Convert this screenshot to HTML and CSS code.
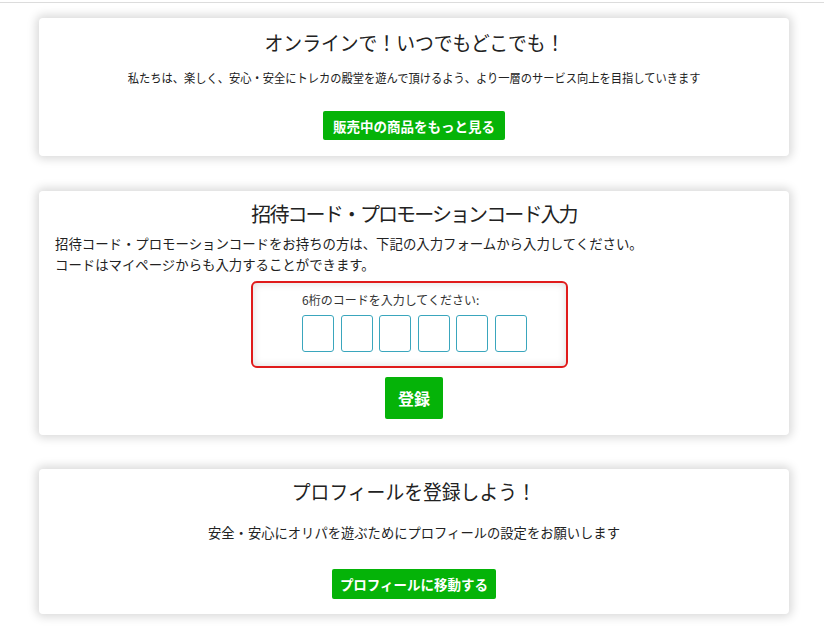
FILE: index.html
```html
<!DOCTYPE html>
<html lang="ja">
<head>
<meta charset="utf-8">
<link rel="stylesheet" href="styles.css">
</head>
<body>
<div class="topbar"></div>
<main class="main">
  <section class="card card-1">
    <h2 class="title"><span class="squeeze sq-title">オンラインで！いつでもどこでも！</span></h2>
    <p class="lead small"><span class="squeeze sq-lead">私たちは、楽しく、安心・安全にトレカの殿堂を遊んで頂けるよう、より一層のサービス向上を目指していきます</span></p>
    <div class="btn-row"><a class="btn btn-1">販売中の商品をもっと見る</a></div>
  </section>

  <section class="card card-2">
    <h2 class="title title-2">招待コード・プロモーションコード入力</h2>
    <p class="desc">招待コード・プロモーションコードをお持ちの方は、下記の入力フォームから入力してください。<br>コードはマイページからも入力することができます。</p>
    <div class="code-wrap">
      <div class="code-box">
        <div class="code-label">6桁のコードを入力してください:</div>
        <div class="code-inputs">
          <input class="code-input" maxlength="1">
          <input class="code-input" maxlength="1">
          <input class="code-input" maxlength="1">
          <input class="code-input" maxlength="1">
          <input class="code-input" maxlength="1">
          <input class="code-input" maxlength="1">
        </div>
      </div>
    </div>
    <div class="btn-row"><a class="btn btn-reg">登録</a></div>
  </section>

  <section class="card card-3">
    <h2 class="title"><span class="squeeze sq-title">プロフィールを登録しよう！</span></h2>
    <p class="lead mid">安全・安心にオリパを遊ぶためにプロフィールの設定をお願いします</p>
    <div class="btn-row"><a class="btn btn-3">プロフィールに移動する</a></div>
  </section>
</main>
</body>
</html>
```

FILE: styles.css
```css
* { box-sizing: border-box; }
html, body { margin: 0; padding: 0; background: #fff; }
body {
  font-family: "Noto Sans CJK JP", "Noto Sans", sans-serif;
  color: #222;
  width: 824px;
  height: 641px;
  overflow: hidden;
}
.topbar {
  height: 3px;
  border-bottom: 1px solid #dcdcdc;
}
.main {
  padding: 15px 35px 0 39px;
  display: flex;
  flex-direction: column;
}
.card {
  width: 750px;
  background: #fff;
  border-radius: 4px;
  box-shadow: 0 0 10px 3px rgba(0, 0, 0, 0.15);
  padding: 12px 16px 16px;
}
.card-2 { margin-top: 35px; padding-top: 10px; }
.card-3 { margin-top: 34px; padding-top: 10px; padding-bottom: 15px; }
.title {
  margin: 0;
  font-size: 20px;
  font-weight: 400;
  line-height: 26px;
  text-align: center;
  color: #222;
}
.title-2 { letter-spacing: -1.9px; }
.squeeze {
  display: inline-block;
  transform-origin: center;
  white-space: nowrap;
}
.sq-title { transform: scaleX(0.94); }
.sq-lead { transform: scaleX(0.9); }
.lead {
  margin: 0;
  text-align: center;
  color: #222;
}
.lead.small { font-size: 12.5px; line-height: 18px; margin-top: 13px; }
.lead.mid { font-size: 13.3px; line-height: 20px; margin-top: 18px; }
.btn-row { display: flex; justify-content: center; }
.btn {
  display: flex;
  align-items: center;
  justify-content: center;
  background: #05b308;
  color: #fff;
  font-weight: 700;
  border-radius: 2px;
  text-decoration: none;
}
.btn-1 { width: 182px; height: 29px; margin-top: 24px; font-size: 13.5px; }
.btn-3 { width: 164px; height: 30px; margin-top: 26px; font-size: 13.5px; }
.btn-reg { width: 58px; height: 42px; margin-top: 9px; font-size: 16px; }
.desc {
  margin: 6px 0 0;
  font-size: 13.4px;
  line-height: 21px;
  color: #222;
}
.code-wrap { display: flex; justify-content: center; margin-top: 6px; padding-right: 9px; }
.code-box {
  width: 317px;
  height: 87px;
  border: 2px solid #e01b1b;
  border-radius: 6px;
  box-shadow: inset 0 0 8px rgba(0, 0, 0, 0.14);
  padding: 9px 0 0 49px;
}
.code-label {
  font-size: 12px;
  line-height: 16px;
  color: #333;
}
.code-inputs {
  display: flex;
  gap: 6.5px;
  margin-top: 7px;
}
.code-input {
  width: 32px;
  height: 37px;
  border: 1.5px solid #3aa6bd;
  border-radius: 3px;
  background: #fff;
  padding: 0;
  outline: none;
}
```
